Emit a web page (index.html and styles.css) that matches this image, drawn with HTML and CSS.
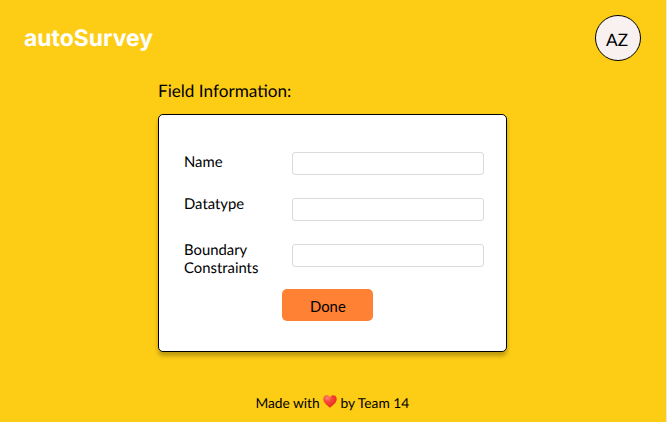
FILE: index.html
```html
<!DOCTYPE html>
<html lang="en">
<head>
<meta charset="utf-8">
<title>autoSurvey</title>
<link rel="stylesheet" href="styles.css">
</head>
<body>
<div class="page">
  <header class="header">
    <div class="brand">autoSurvey</div>
    <div class="avatar">AZ</div>
  </header>
  <main class="main">
    <h1 class="title">Field Information:</h1>
    <form class="card">
      <div class="row"><label class="label" for="name">Name</label><input class="input" id="name"></div>
      <div class="row"><label class="label label-raised" for="type">Datatype</label><input class="input" id="type"></div>
      <div class="row row-tall"><label class="label label-raised" for="bounds">Boundary Constraints</label><input class="input" id="bounds"></div>
      <button class="done" type="button">Done</button>
    </form>
  </main>
  <footer class="footer">
    <span>Made with</span>
    <svg class="heart" viewBox="0 0 14 13" aria-hidden="true">
      <defs>
        <radialGradient id="red" cx="0.3" cy="0.22" r="0.85">
          <stop offset="0" stop-color="#ff8a78"/>
          <stop offset="0.35" stop-color="#fa4a38"/>
          <stop offset="1" stop-color="#e0281a"/>
        </radialGradient>
      </defs>
      <path fill="url(#red)" d="M7 2.4C6.2.9 5 .3 3.7.3 1.700.3.3 1.900.3 4c0 3.600 3.500 6.300 6.700 8.700C10.200 10.300 13.700 7.600 13.700 4c0-2.100-1.400-3.700-3.400-3.700C9 .3 7.800.9 7 2.400Z"/>
    </svg>
    <span>by Team 14</span>
  </footer>
</div>
</body>
</html>
```
FILE: styles.css
```css
* { box-sizing: border-box; }
body {
  margin: 0;
  background: #e9e7df;
  color: #000;
  font-family: Lato, sans-serif;
  text-rendering: geometricPrecision;
}
.page {
  width: 666px;
  height: 422px;
  overflow: hidden;
  display: flex;
  flex-direction: column;
  background: #fdcd15;
}
.header {
  height: 76px;
  padding: 15px 25.500px 0 24px;
  display: flex;
  justify-content: space-between;
}
.brand {
  margin-top: 9px;
  font: 700 22.900px/28px Inter, sans-serif;
  color: #fff;
}
.avatar {
  width: 46px;
  height: 46px;
  border: 1.500px solid #000;
  border-radius: 50%;
  background: #f9f1f0;
  font-size: 17.200px;
  line-height: 48px;
  text-align: center;
  text-indent: -1px;
}
.main {
  width: 349px;
  margin-left: 158px;
}
.title {
  height: 38px;
  margin: 0;
  padding-top: 4px;
  font-size: 17.150px;
  font-weight: 400;
  line-height: 22px;
}
.card {
  height: 238px;
  padding: 37px 22px 0 25px;
  border: 1px solid #000;
  border-radius: 5px;
  background: #fff;
  box-shadow: 0 4px 4px rgba(0, 0, 0, .25);
}
.row {
  height: 46px;
  display: flex;
  align-items: flex-start;
}
.row-tall { height: 52px; }
.label {
  width: 108px;
  padding: 1px 20px 0 0;
  font-size: 14.850px;
  line-height: 18px;
}
.label-raised { margin-top: -4px; }
.input {
  width: 192px;
  height: 23px;
  padding: 0 6px;
  border: 1px solid #dadada;
  border-radius: 3px;
  background: #fff;
}
.done {
  display: block;
  width: 91px;
  height: 32px;
  margin: -7px 0 0 98.400px;
  padding: 2px 0 0;
  border: 0;
  border-radius: 5px;
  background: #ff8133;
  color: #000;
  font: 400 14.850px/18px Lato, sans-serif;
}
.footer {
  margin-top: 42px;
  padding-left: 255.400px;
  display: flex;
  gap: 3.400px;
  font-size: 13.750px;
  line-height: 17px;
}
.heart {
  width: 14px;
  height: 13px;
  margin-top: 1px;
}
```
